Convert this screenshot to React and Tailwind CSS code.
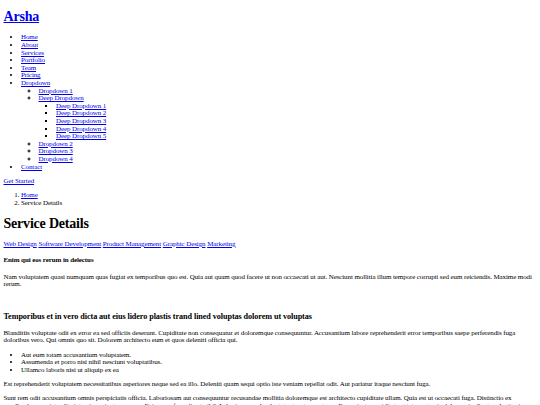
import React from 'react';

const link = 'text-[#0000ee] underline';

const deepItems = ['Deep Dropdown 1', 'Deep Dropdown 2', 'Deep Dropdown 3', 'Deep Dropdown 4', 'Deep Dropdown 5'];

const Header = () => (
  <header>
    <div>
      <a href="#" className={link}>
        <h1 className="text-[14px] leading-[16.09px] tracking-[-0.2px] font-bold mt-[9.38px] mb-[9px]">Arsha</h1>
      </a>
    </div>
    <nav>
      <ul className="list-disc pl-[17.5px] my-[6.6px]">
        {['Home', 'About', 'Services', 'Portfolio', 'Team', 'Pricing'].map(item => (
          <li key={item}><a href="#" className={link}>{item}</a></li>
        ))}
        <li>
          <a href="#" className={link}>Dropdown</a>
          <ul className="list-[circle] pl-[17.5px]">
            <li><a href="#" className={link}>Dropdown 1</a></li>
            <li>
              <a href="#" className={link}>Deep Dropdown</a>
              <ul className="list-[square] pl-[17.5px]">
                {deepItems.map(item => (
                  <li key={item}><a href="#" className={link}>{item}</a></li>
                ))}
              </ul>
            </li>
            <li><a href="#" className={link}>Dropdown 2</a></li>
            <li><a href="#" className={link}>Dropdown 3</a></li>
            <li><a href="#" className={link}>Dropdown 4</a></li>
          </ul>
        </li>
        <li><a href="#" className={link}>Contact</a></li>
      </ul>
    </nav>
    <a href="#" className={link}>Get Started</a>
  </header>
);

const ServiceDetails = () => (
  <section>
    <div>
      <div>
        <a href="#" className={link}>Web Design</a>{' '}
        <a href="#" className={link}>Software Development</a>{' '}
        <a href="#" className={link}>Product Management</a>{' '}
        <a href="#" className={link}>Graphic Design</a>{' '}
        <a href="#" className={link}>Marketing</a>
      </div>
      <h4 className="font-bold my-[8.8px]">Enim qui eos rerum in delectus</h4>
      <p className="my-[6.6px]">
        Nam voluptatem quasi numquam quas fugiat ex temporibus quo est. Quia aut quam quod facere ut non occaecati ut aut. Nesciunt mollitia illum tempore corrupti sed eum reiciendis. Maxime modi rerum.
      </p>
    </div>
    <div>
      <div className="h-[10px]"></div>
      <h3 className="text-[8.19px] leading-[8.9px] tracking-[-0.08px] font-bold my-[7.7px]">
        Temporibus et in vero dicta aut eius lidero plastis trand lined voluptas dolorem ut voluptas
      </h3>
      <p className="my-[6.6px]">
        Blanditiis voluptate odit ex error ea sed officiis deserunt. Cupiditate non consequatur et doloremque consequuntur. Accusantium labore reprehenderit error temporibus saepe perferendis fuga doloribus vero. Qui omnis quo sit. Dolorem architecto eum et quos deleniti officia qui.
      </p>
      <ul className="list-disc pl-[17.5px] my-[6.6px]">
        <li>Aut eum totam accusantium voluptatem.</li>
        <li>Assumenda et porro nisi nihil nesciunt voluptatibus.</li>
        <li>Ullamco laboris nisi ut aliquip ex ea</li>
      </ul>
      <p className="my-[6.6px]">
        Est reprehenderit voluptatem necessitatibus asperiores neque sed ea illo. Deleniti quam sequi optio iste veniam repellat odit. Aut pariatur itaque nesciunt fuga.
      </p>
      <p className="my-[6.6px]">
        Sunt rem odit accusantium omnis perspiciatis officia. Laboriosam aut consequuntur recusandae mollitia doloremque est architecto cupiditate ullam. Quia est ut occaecati fuga. Distinctio ex repellendus eveniet velit sint quia sapiente cumque. Et ipsa perferendis ut nihil. Laboriosam vel voluptates tenetur nostrum. Eaque iusto cupiditate et totam et quia dolorum in. Sunt molestiae ipsum at consequatur vero. Architecto ut pariatur autem ad non cumque nesciunt qui maxime. Sunt eum quia impedit dolore alias explicabo ea.
      </p>
    </div>
  </section>
);

export default function App() {
  return (
    <div className="font-['Liberation_Serif','Times_New_Roman',serif] text-[7px] leading-[7.6px] tracking-[-0.1px] text-black bg-white px-[3.5px] min-h-screen">
      <Header />
      <main>
        <div>
          <nav>
            <ol className="list-decimal pl-[17.5px] my-[6.6px]">
              <li><a href="#" className={link}>Home</a></li>
              <li>Service Details</li>
            </ol>
          </nav>
          <h1 className="text-[14px] leading-[16.09px] tracking-[-0.2px] font-bold my-[8.86px]">Service Details</h1>
        </div>
        <ServiceDetails />
      </main>
    </div>
  );
}
